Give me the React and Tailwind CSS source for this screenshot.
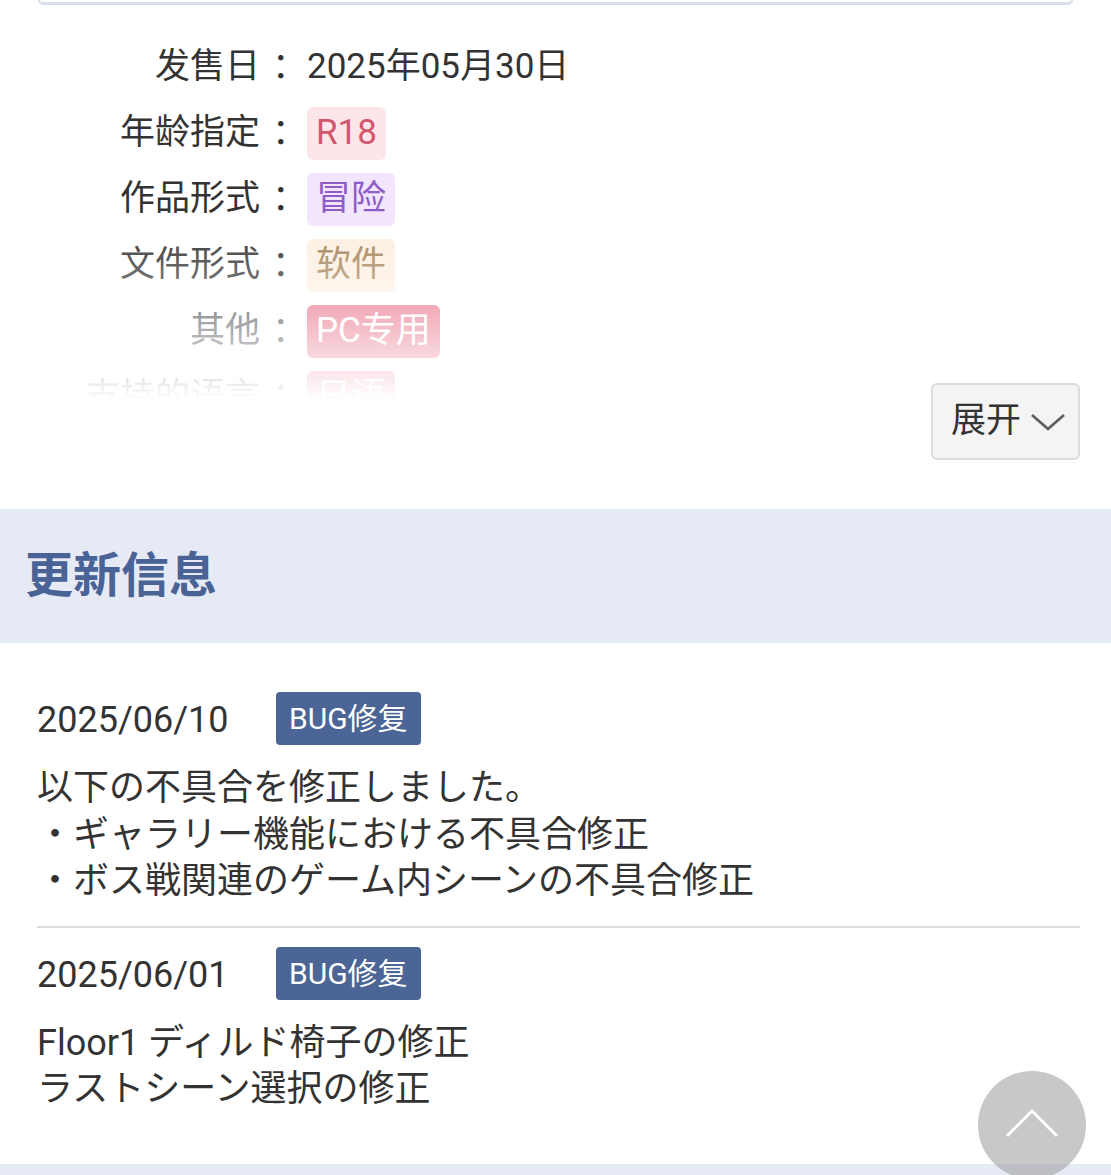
import React from "react";

const specs = [
  { label: "发售日", value: "2025年05月30日" },
  { label: "年龄指定", tag: "R18", cls: "bg-[#fde6ea] text-[#d2566d]" },
  { label: "作品形式", tag: "冒险", cls: "bg-[#f2e5fd] text-[#8d5cc6]" },
  { label: "文件形式", tag: "软件", cls: "bg-[#fdefe0] text-[#a5845b]" },
  { label: "其他", tag: "PC专用", cls: "bg-[#e5607a] text-white" },
  { label: "支持的语言", tag: "日语", cls: "bg-[#e5607a] text-white" },
];

const updates = [
  {
    date: "2025/06/10",
    lines: ["以下の不具合を修正しました。", "・ギャラリー機能における不具合修正", "・ボス戦関連のゲーム内シーンの不具合修正"],
  },
  {
    date: "2025/06/01",
    lines: ["Floor1 ディルド椅子の修正", "ラストシーン選択の修正"],
  },
];

function SpecRow({ row }) {
  return (
    <div className="flex items-center h-[53px] shrink-0">
      <div className="w-[260px] text-right">{row.label}</div>
      <div className="ml-[12px] w-[35px]">：</div>
      <div>
        {row.tag ? (
          <span className={"inline-flex items-center h-[53px] px-[9px] rounded-[6px] " + row.cls}>{row.tag}</span>
        ) : (
          row.value
        )}
      </div>
    </div>
  );
}

function UpdateEntry({ item }) {
  return (
    <div>
      <div className="flex items-center h-[53px]">
        <div className="w-[239px] text-[36px] pt-[3px]">{item.date}</div>
        <span className="inline-flex items-center h-[53px] px-[13px] rounded-[4px] bg-[#4a6596] text-white text-[30px]">
          BUG修复
        </span>
      </div>
      <div
        className="mt-[20px] text-[36px] leading-[46.5px]"
        style={{ fontFamily: 'Roboto, "Noto Sans CJK JP", sans-serif' }}
      >
        {item.lines.map((l, i) => (
          <div key={i}>{l}</div>
        ))}
      </div>
    </div>
  );
}

export default function App() {
  return (
    <div
      className="relative w-[1111px] h-[1175px] overflow-hidden bg-white text-[#333]"
      style={{ fontFamily: 'Roboto, "Noto Sans CJK SC", sans-serif' }}
    >
      {/* bottom edge of the card above */}
      <div className="mx-[38px] h-[5px] rounded-b-[10px] border-x-2 border-b-[3px] border-[#d9dfea]" />

      {/* spec list, collapsed */}
      <div className="relative mt-[36px] h-[359px] overflow-hidden text-[35px]">
        <div className="flex flex-col gap-[13px]">
          {specs.map((r, i) => (
            <SpecRow key={i} row={r} />
          ))}
        </div>
        <div className="absolute left-0 right-0 bottom-0 h-[175px] bg-gradient-to-b from-white/0 to-white" />
      </div>

      <div className="relative -mt-[17px] flex justify-end pr-[31px]">
        <button className="flex items-center h-[77px] w-[149px] pl-[18px] rounded-[6px] border-2 border-[#dcdcdc] bg-[#f4f4f4] text-[35px] text-[#333]">
          展开
          <svg width="36" height="20" viewBox="0 0 36 20" className="ml-[9px]">
            <path d="M2 3 L18 17 L34 3" fill="none" stroke="#5e5e5e" strokeWidth="2.8" />
          </svg>
        </button>
      </div>

      {/* update info header */}
      <div className="mt-[49px] h-[134px] bg-[#e6eaf5] flex items-center pl-[25px]">
        <h2 className="text-[48px] font-bold text-[#4a6396]">更新信息</h2>
      </div>

      <div className="pt-[49px] pl-[37px] pr-[31px]">
        <UpdateEntry item={updates[0]} />
        <div className="mt-[21px] border-t-2 border-[#dddddd]" />
        <div className="pt-[19px]">
          <UpdateEntry item={updates[1]} />
        </div>
      </div>

      <div className="mt-[51px] h-[40px] bg-[#e6eaf5]" />

      {/* back to top */}
      <div className="absolute left-[978px] top-[1071px] w-[108px] h-[108px] rounded-full bg-[rgba(150,150,150,0.52)] flex items-center justify-center">
        <svg width="56" height="32" viewBox="0 0 56 32" className="-mt-[4px]">
          <path d="M3 29 L28 4 L53 29" fill="none" stroke="white" strokeWidth="3" />
        </svg>
      </div>
    </div>
  );
}
